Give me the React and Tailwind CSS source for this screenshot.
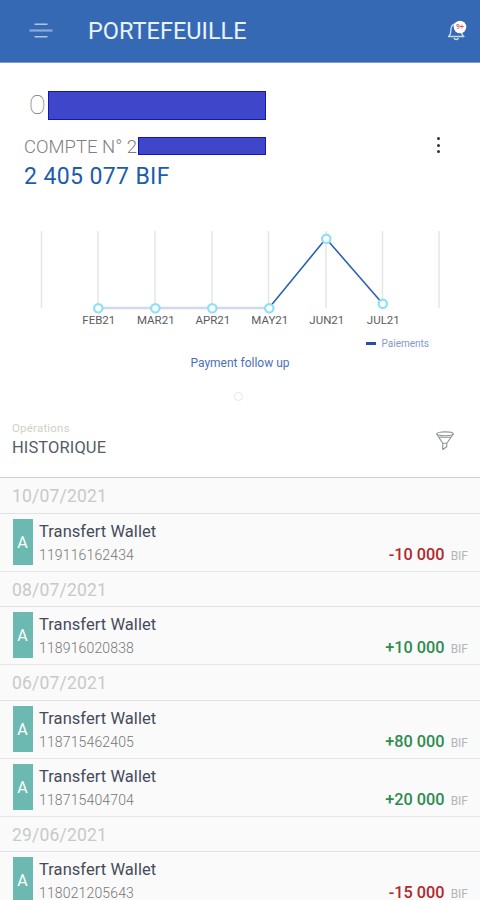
import React from "react";

const months = [
  { label: "FEB21", x: 98, y: 82 },
  { label: "MAR21", x: 155, y: 82 },
  { label: "APR21", x: 212, y: 82 },
  { label: "MAY21", x: 269, y: 82 },
  { label: "JUN21", x: 326, y: 12.5 },
  { label: "JUL21", x: 382.5, y: 77.5 },
];

const gridLines = [41.5, 98, 155, 212, 268.5, 326, 382.5, 439];

const history = [
  {
    date: "10/07/2021",
    items: [{ ref: "119116162434", amount: "-10 000" }],
  },
  {
    date: "08/07/2021",
    items: [{ ref: "118916020838", amount: "+10 000" }],
  },
  {
    date: "06/07/2021",
    items: [
      { ref: "118715462405", amount: "+80 000" },
      { ref: "118715404704", amount: "+20 000" },
    ],
  },
  {
    date: "29/06/2021",
    items: [{ ref: "118021205643", amount: "-15 000" }],
  },
];

function Header() {
  return (
    <header className="flex h-[63px] items-center border-b border-[#8299cf] bg-[#3669b3] pl-[29px] pr-[11px]">
      <button aria-label="Menu">
        <svg width="24" height="16" viewBox="0 0 24 16" fill="none" stroke="#b0c5ec">
          <path d="M5.5 1.3H18.5M5.5 13.7H18.5" strokeWidth="1.4" />
          <path d="M.5 7.5H23.5" strokeWidth="2.2" stroke="#8ea9dc" />
        </svg>
      </button>
      <h1 className="ml-[35px] text-[23.5px] leading-7 text-[#e9f2ff]">PORTEFEUILLE</h1>
      <button className="ml-auto" aria-label="Notifications">
        <svg width="22" height="22" viewBox="0 0 22 22" fill="none">
          <path
            d="M1.500 16.500C4.500 14.500 3.500 11 4 8.500C4.500 5.500 6.500 4 9 4C12 4 14 6 14 9C14 12 14 14.500 17 16.500Z"
            stroke="#c3dcf7"
            strokeWidth="1.3"
            strokeLinejoin="round"
          />
          <path d="M7 18C7.500 20 11 20 11.500 18" stroke="#c3dcf7" strokeWidth="1.3" />
          <circle cx="13" cy="7" r="6.300" fill="#fff" />
          <text x="13" y="9.300" textAnchor="middle" fontSize="7" fontWeight="500" fill="#d9536c">
            9+
          </text>
        </svg>
      </button>
    </header>
  );
}

function Account() {
  return (
    <section className="flex h-[137px] justify-between pl-6 pr-[36px] pt-[28px]">
      <div>
        <div className="flex h-[29px] items-center pl-[5px]">
          <span className="w-[18.500px] text-[25px] font-thin leading-none text-[#777]">O</span>
          <span className="h-[29px] w-[218px] border border-[#1616b8] bg-[#4046c9]" />
        </div>
        <div className="mt-[16px] flex h-5 items-center whitespace-nowrap">
          <span className="w-[113.500px] pt-[2px] text-[18.500px] font-light leading-5 text-[#808080]">
            COMPTE N° 2
          </span>
          <span className="relative h-[18px] w-[128.500px] border border-[#1616b8] bg-[#4046c9]" />
        </div>
        <p className="mt-[7px] text-[23px] leading-7 tracking-[0.38px] text-[#1c5cac]">2 405 077 BIF</p>
      </div>
      <button className="mt-[44px] flex h-[20px] w-3 flex-col items-center justify-center gap-[3.500px]" aria-label="Options">
        <span className="size-[3px] rounded-full bg-[#333]" />
        <span className="size-[3px] rounded-full bg-[#333]" />
        <span className="size-[3px] rounded-full bg-[#333]" />
      </button>
    </section>
  );
}

function Chart() {
  return (
    <section className="flex h-[210px] flex-col items-center pt-[26px]">
      <svg width="480" height="106" viewBox="0 0 480 106" fill="none" className="shrink-0">
        {gridLines.map((x) => (
          <path key={x} d={`M${x} 5V82`} stroke="#e6e6e6" strokeWidth="1.5" />
        ))}
        <path d="M98 82H269" stroke="#d3d8ec" strokeWidth="2.5" />
        <path d="M269 82L326 12.500L382.500 77.500" stroke="#2c63b0" strokeWidth="1.6" />
        {months.map((m) => (
          <g key={m.label}>
            <circle cx={m.x + 0.3} cy={m.y + 0.3} r="4.200" fill="#fff" stroke="#8be0fa" strokeWidth="2.200" />
            <text x={m.x + 0.8} y="98" textAnchor="middle" fontSize="11.5" fill="#5c5c5c">
              {m.label}
            </text>
          </g>
        ))}
      </svg>
      <div className="flex h-[22px] w-full items-center justify-end gap-[6px] pr-[51px]">
        <span className="h-[3px] w-[10px] bg-[#2450a4]" />
        <span className="pt-px text-[10px] leading-none text-[#7f9ad2]">Paiements</span>
      </div>
      <p className="text-[12px] leading-[18px] text-[#4b6fb8]">Payment follow up</p>
      <span className="mr-[4px] mt-[20px] size-[9px] rounded-full border border-[#e6e6e6]" />
    </section>
  );
}

function HistoryHeader() {
  return (
    <div className="flex h-[67px] justify-between pl-3 pr-[26px] pt-[10px]">
      <div>
        <p className="pt-px text-[11.500px] leading-[15px] tracking-[0.2px] text-[#d3cfc6]">Opérations</p>
        <h2 className="mt-[2px] text-[16.500px] leading-5 tracking-[0.1px] text-[#565c66]">HISTORIQUE</h2>
      </div>
      <button className="mt-[11px] h-[20px]" aria-label="Filtrer">
        <svg width="18" height="20" viewBox="0 0 18 20" fill="none" stroke="#8d9296" strokeWidth="1.100" strokeLinejoin="round">
          <ellipse cx="9" cy="2.800" rx="8.300" ry="1.900" />
          <path d="M.7 3L6.700 12.200V18.500L10.800 15.800V12.200L17.300 3M2.800 6.200H15.200M6.700 12.200H10.800" />
        </svg>
      </button>
    </div>
  );
}

function Operation({ item }) {
  const isDebit = item.amount.startsWith("-");
  return (
    <div className="flex h-[58px] items-start border-b border-[#e6e6e6] pl-[12.500px] pr-3 pt-[5px]">
      <div className="flex h-[46px] w-[20px] items-center justify-center bg-[#6bb9b0] pt-[2px] text-[16px] text-white">
        A
      </div>
      <div className="ml-[6.500px] pt-[2px]">
        <p className="text-[16.500px] leading-[22px] tracking-[0.05px] text-[#454b5a]">Transfert Wallet</p>
        <p className="mt-[2px] text-[14px] font-light leading-5 tracking-[0.15px] text-[#777]">{item.ref}</p>
      </div>
      <div className="ml-auto flex items-baseline gap-[6px] pt-[26px]">
        <span
          className={
            isDebit
              ? "text-[16.300px] font-medium leading-5 text-[#b3272b]"
              : "text-[16.300px] font-medium leading-5 text-[#2c8c4f]"
          }
        >
          {item.amount}
        </span>
        <span className="text-[12px] text-[#b2b5b9]">BIF</span>
      </div>
    </div>
  );
}

function App() {
  return (
    <main className="h-[900px] w-[480px] overflow-hidden bg-white font-['Roboto',sans-serif]">
      <Header />
      <Account />
      <Chart />
      <HistoryHeader />
      <div className="border-t border-[#cfcfcf] bg-[#fafafa]">
        {history.map((group) => (
          <section key={group.date}>
            <h3 className="flex h-[35.500px] items-center border-b border-[#e2e2e2] pl-3 pt-[2px] text-[17.500px] tracking-[0.2px] text-[#c9c9c9]">
              {group.date}
            </h3>
            {group.items.map((item) => (
              <Operation key={item.ref} item={item} />
            ))}
          </section>
        ))}
      </div>
    </main>
  );
}

export default App;
